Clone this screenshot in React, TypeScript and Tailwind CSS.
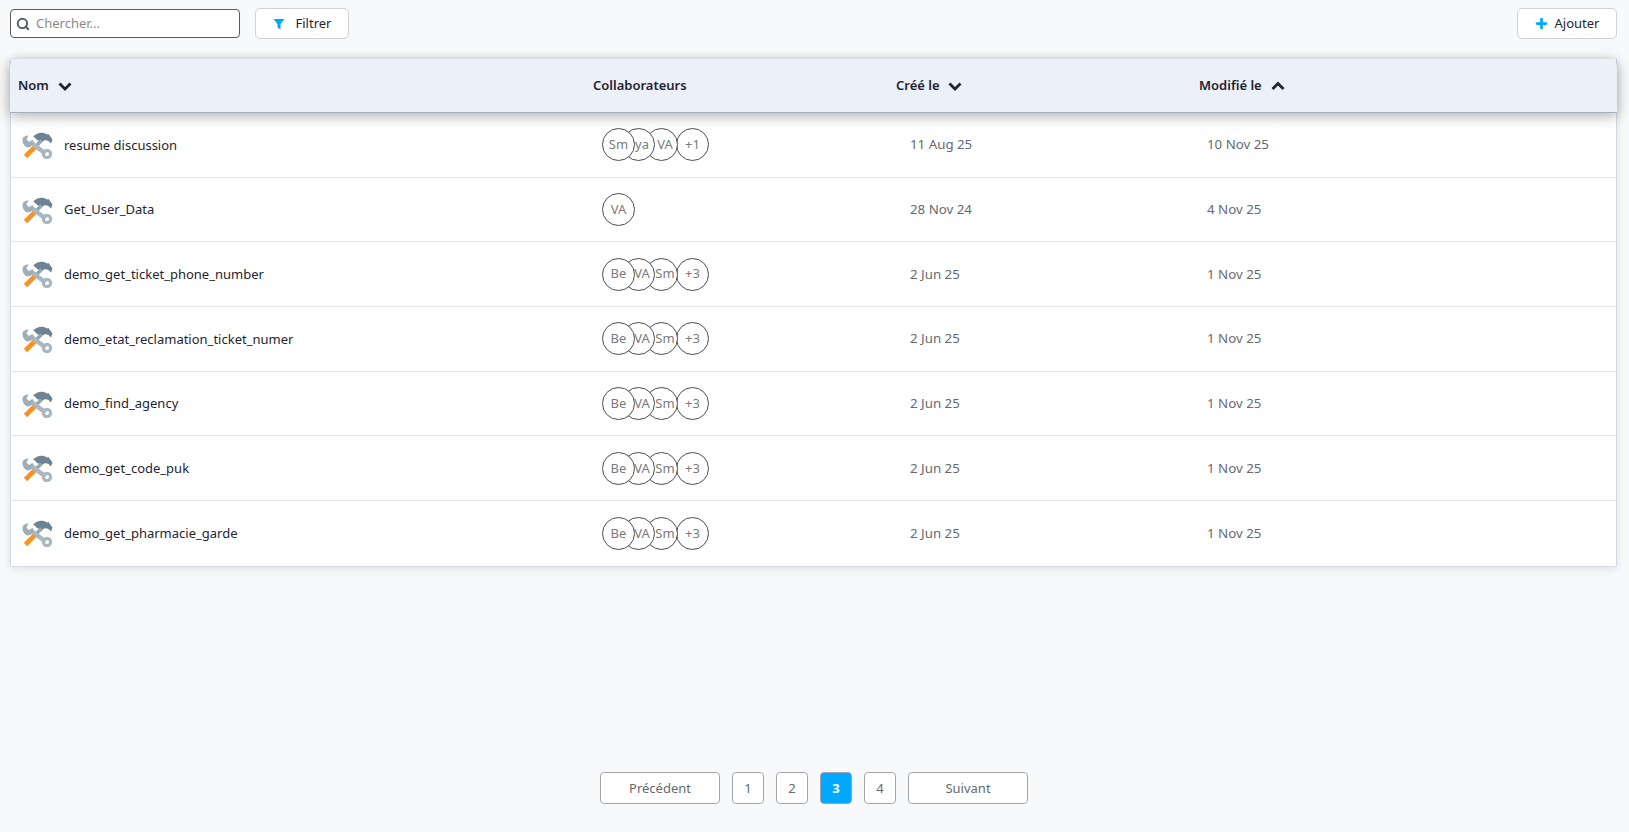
import { Search, Plus } from "lucide-react";

type Tool = { name: string; people: string[]; created: string; updated: string };

const tools: Tool[] = [
  { name: "resume discussion", people: ["Sm", "ya", "VA", "+1"], created: "11 Aug 25", updated: "10 Nov 25" },
  { name: "Get_User_Data", people: ["VA"], created: "28 Nov 24", updated: "4 Nov 25" },
  { name: "demo_get_ticket_phone_number", people: ["Be", "VA", "Sm", "+3"], created: "2 Jun 25", updated: "1 Nov 25" },
  { name: "demo_etat_reclamation_ticket_numer", people: ["Be", "VA", "Sm", "+3"], created: "2 Jun 25", updated: "1 Nov 25" },
  { name: "demo_find_agency", people: ["Be", "VA", "Sm", "+3"], created: "2 Jun 25", updated: "1 Nov 25" },
  { name: "demo_get_code_puk", people: ["Be", "VA", "Sm", "+3"], created: "2 Jun 25", updated: "1 Nov 25" },
  { name: "demo_get_pharmacie_garde", people: ["Be", "VA", "Sm", "+3"], created: "2 Jun 25", updated: "1 Nov 25" },
];

const pages = ["1", "2", "3", "4"];

// the circles overlap unevenly, and the text sits off centre in the 2nd and 3rd
const avatarOffsets = ["", "-ml-[13px] pl-[7px]", "-ml-[10px] pl-[7px]", "-ml-[2px]"];

function Chevron({ up = false, wide = false }: { up?: boolean; wide?: boolean }) {
  return (
    <svg width="14" height="10" viewBox="0 0 14 10" className={wide ? "ml-[9px]" : "ml-[8px]"}>
      <path
        d={up ? "M1.5 8 L7 2.5 L12.5 8" : "M1.5 2.5 L7 8 L12.5 2.5"}
        fill="none"
        stroke="#1f2430"
        strokeWidth="2.8"
      />
    </svg>
  );
}

function ToolIcon() {
  return (
    <svg width="31" height="28" viewBox="0 0 31 28" className="shrink-0">
      {/* hammer head */}
      <path
        d="M11 5.5 C15 1.5 21 0.5 25 3.5 L26.5 3 L30.5 8.5 L29 12.5 L26.5 10 C24 8.5 22 9 20 11 L15 9 C14 7.5 12.5 6 11 5.5 Z"
        fill="#6b8393"
      />
      {/* handle */}
      <path d="M12.5 16.5 L19.5 9.5" stroke="#9aa6ae" strokeWidth="3.8" fill="none" />
      <path d="M3.5 25.5 L13.5 15.5" stroke="#f7931e" strokeWidth="4.6" fill="none" />
      {/* wrench */}
      <path d="M8 11 L23.5 22.5" stroke="#a9b7c0" strokeWidth="4.6" fill="none" />
      <path
        d="M0.5 9 C0.5 6 3 4.5 6.5 4.5 L4.5 8.5 L7 11 L11 9 C12.5 12.5 9.5 16.5 6 16.5 C3 16.5 0.5 12.5 0.5 9 Z"
        fill="#9fafb9"
      />
      <circle cx="25" cy="23" r="3.6" fill="none" stroke="#a9b7c0" strokeWidth="3.2" />
    </svg>
  );
}

function Avatars({ people }: { people: string[] }) {
  return (
    <div className="flex pl-[8px]">
      {people.map((p, i) => (
        <div
          key={i}
          style={{ zIndex: people.length - i }}
          className={`relative flex h-[33px] w-[33px] items-center justify-center rounded-full border border-[#4d4d4d] bg-white text-[13px] text-[#7b7b7b] ${avatarOffsets[i]}`}
        >
          {p}
        </div>
      ))}
    </div>
  );
}

export default function App() {
  return (
    <main className="flex min-h-screen flex-col bg-[#f8f9fb] font-['Noto_Sans',sans-serif] text-[13px] text-[#1f2430]">
      {/* toolbar */}
      <div className="flex items-center pl-[10px] pr-[12px] pt-[8px]">
        <div className="flex h-[29px] w-[230px] items-center rounded-[4px] border border-[#5c5c5c] bg-white pl-[5px]">
          <Search size={14} strokeWidth={3.4} className="text-[#55606a]" />
          <span className="ml-[6px] text-[#8a8a8a]">Chercher...</span>
        </div>
        <button className="ml-[15px] flex h-[31px] w-[94px] items-center justify-center gap-[11px] rounded-[5px] border border-[#d0d2d6] bg-white">
          <svg width="12" height="12" viewBox="0 0 12 12">
            <path d="M0.5 1 H11.5 L7.5 6 V11.5 L4.5 9.5 V6 Z" fill="#00a8ff" />
          </svg>
          Filtrer
        </button>
        <button className="ml-auto flex h-[31px] w-[100px] items-center justify-center gap-[6px] rounded-[5px] border border-[#d0d2d6] bg-white pr-[1px]">
          <Plus size={15} strokeWidth={4.4} className="text-[#00a8ff]" />
          Ajouter
        </button>
      </div>

      {/* table */}
      <div className="ml-[10px] mr-[12px] mt-[20px] rounded-b-[2px] border-x border-b border-[#d3dae6] bg-white shadow-[0_2px_8px_rgba(0,0,0,0.1)]">
        <div className="relative z-10 -mx-px grid h-[54px] grid-cols-[583px_303px_303px_1fr] items-center rounded-t-[8px] border-b border-[#a7afc0] bg-[#ecf0f8] font-semibold shadow-[0_3px_14px_rgba(0,0,0,0.32)]">
          <div className="flex items-center pl-[8px]">
            Nom
            <Chevron wide />
          </div>
          <div>Collaborateurs</div>
          <div className="flex items-center">
            Créé le
            <Chevron />
          </div>
          <div className="flex items-center">
            Modifié le
            <Chevron up wide />
          </div>
        </div>
        {tools.map((t, i) => (
          <div
            key={t.name}
            className={`grid h-[64.7px] grid-cols-[583px_302px_304px_1fr] items-center ${i < tools.length - 1 ? "border-b border-[#e4e6ea]" : ""}`}
          >
            <div className="flex items-center pl-[11px]">
              <ToolIcon />
              <span className="ml-[11px] pt-[1px]">{t.name}</span>
            </div>
            <Avatars people={t.people} />
            <div className="pl-[14px] pt-[1px] text-[13.3px] text-[#666a70]">{t.created}</div>
            <div className="pl-[7px] pt-[1px] text-[13.3px] text-[#666a70]">{t.updated}</div>
          </div>
        ))}
      </div>

      {/* pagination */}
      <div className="mt-auto flex justify-center gap-[12px] pb-[28px] pr-[1px] text-[#666a70]">
        <button className="h-[32px] w-[120px] rounded-[4px] border border-[#a3a5aa] bg-white pt-[1px]">Précédent</button>
        {pages.map((p) => (
          <button
            key={p}
            className={
              p === "3"
                ? "h-[32px] w-[32px] rounded-[4px] border border-[#a3a5aa] bg-[#00a8ff] pt-[1px] font-bold text-white"
                : "h-[32px] w-[32px] rounded-[4px] border border-[#a3a5aa] bg-white pt-[1px]"
            }
          >
            {p}
          </button>
        ))}
        <button className="h-[32px] w-[120px] rounded-[4px] border border-[#a3a5aa] bg-white pt-[1px]">Suivant</button>
      </div>
    </main>
  );
}
